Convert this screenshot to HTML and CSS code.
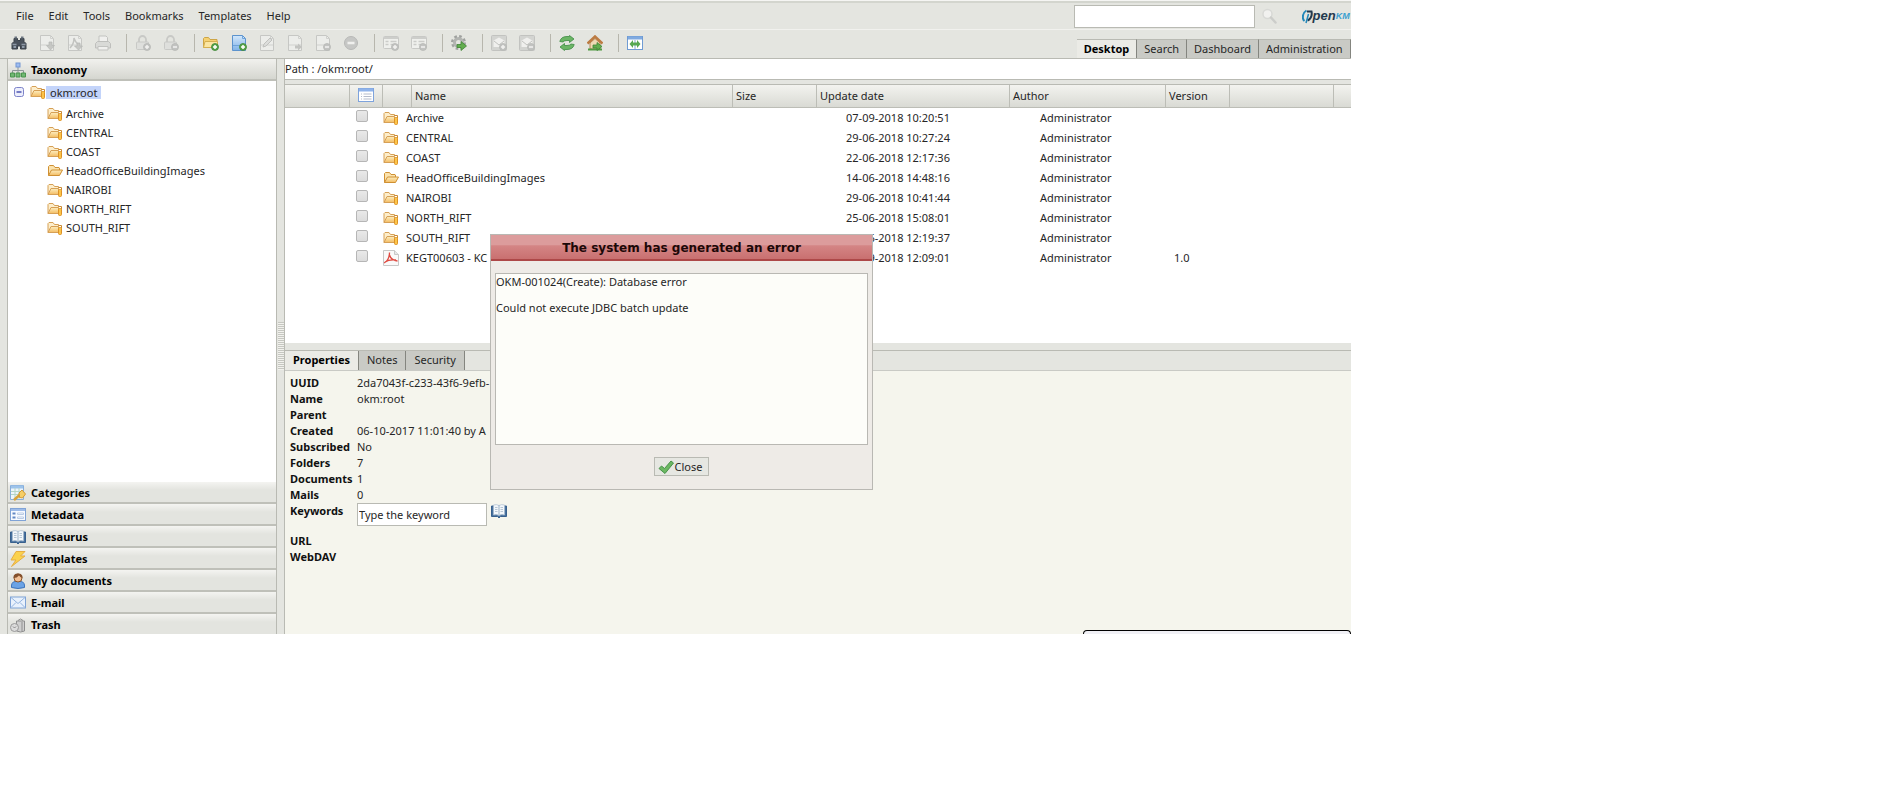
FILE: index.html
```html
<!DOCTYPE html>
<html lang="en">
<head>
    <meta charset="UTF-8">
    <meta name="viewport" content="width=device-width, initial-scale=1.0">
    <title>OpenKM</title>
    <link rel="stylesheet" href="styles.css">
</head>
<body>
    <!-- Shared icons -->
    <svg class="sprite" aria-hidden="true">
        <defs>
            <linearGradient id="gold" x1="0" y1="0" x2="0" y2="1"><stop offset="0" stop-color="#fdeec0"/><stop offset="1" stop-color="#f3bc62"/></linearGradient>
            <linearGradient id="blue" x1="0" y1="0" x2="0" y2="1"><stop offset="0" stop-color="#d4e8fb"/><stop offset="1" stop-color="#7fb2e8"/></linearGradient>
        </defs>
        <symbol id="folder" viewBox="0 0 16 16">
            <path d="M1.500 12.500v-9l1-1h4l1.500 2h4l.5.5v2" fill="#fbe3ae" stroke="#cf9033"/>
            <path d="M1.500 12.500l3-5.500h11l-3 5.500z" fill="url(#gold)" stroke="#cf9033" stroke-linejoin="round"/>
        </symbol>
        <symbol id="folder-sub" viewBox="0 0 16 16">
            <path d="M1 12.500v-9l1-1h4l1.500 2h4v2" fill="#fdeecb" stroke="#d6a056"/>
            <path d="M1 12.500l3-6h7.500v6z" fill="url(#gold)" stroke="#d6a056" stroke-linejoin="round"/>
            <path d="M11.500 5.500h3v3" fill="none" stroke="#c98a35"/>
            <rect x="11.500" y="7.500" width="3" height="7" rx="1" fill="#fbc44a" stroke="#dd9226"/>
        </symbol>
        <symbol id="book" viewBox="0 0 16 16">
            <path d="M.5 3h15v10.500h-6l-1.500 1.500-1.500-1.500h-6z" fill="#47719f" stroke="#38608d"/>
            <path d="M2.500 2q3-1 5.500.5v10q-2.500-1.500-5.500-.5zM13.500 2q-3-1-5.500.5v10q2.500-1.500 5.500-.5z" fill="#f3f7fb" stroke="#a9bccf" stroke-width=".7"/>
            <path d="M4 4.500h2.500M4 6.500h2.500M4 8.500h2.500M9.500 4.500h2.500M9.500 6.500h2.500M9.500 8.500h2.500" stroke="#9bb0c4" stroke-width=".7"/>
        </symbol>
        <symbol id="page" viewBox="0 0 16 16">
            <path d="M1.500.5h10l3 3v12h-13z" fill="#ecedea" stroke="#c6c7c4"/>
            <path d="M11.500.5v3h3M2 10h12" fill="none" stroke="#d0d1ce"/>
        </symbol>
        <symbol id="plus" viewBox="0 0 16 16">
            <circle cx="12" cy="12" r="3.500" fill="#58a64b" stroke="#3d8737" stroke-width=".8"/>
            <path d="M10 12h4M12 10v4" stroke="#fff" stroke-width="1.500"/>
        </symbol>
        <symbol id="plus-off" viewBox="0 0 16 16">
            <circle cx="12" cy="12" r="3.500" fill="#c2c3c1" stroke="#b6b7b5" stroke-width=".8"/>
            <path d="M10 12h4M12 10v4" stroke="#f2f2f0" stroke-width="1.500"/>
        </symbol>
        <symbol id="minus-off" viewBox="0 0 16 16">
            <circle cx="12" cy="12" r="3.500" fill="#c2c3c1" stroke="#b6b7b5" stroke-width=".8"/>
            <path d="M10 12h4" stroke="#f2f2f0" stroke-width="1.500"/>
        </symbol>
        <symbol id="lock" viewBox="0 0 16 16">
            <path d="M4 8V4.500a3.500 3.500 0 0 1 7 0V8" fill="none" stroke="#c8c9c6" stroke-width="1.800"/>
            <rect x="1.500" y="7" width="12" height="7.500" rx="1" fill="#dedfdc" stroke="#c8c9c6"/>
        </symbol>
        <symbol id="form" viewBox="0 0 16 16">
            <rect x=".5" y="1.500" width="15" height="12" rx="1" fill="#eff0ed" stroke="#c8c9c6"/>
            <path d="M1 3h14" stroke="#cdcecb" stroke-width="2"/>
            <path d="M2.500 6.500h3M2.500 9.500h3M7.500 6.500h6M7.500 9.500h4" stroke="#cbccc9" stroke-width="1.500"/>
        </symbol>
        <symbol id="mail-off" viewBox="0 0 16 16">
            <rect x=".5" y=".5" width="15" height="15" rx="1" fill="#d3d4d1" stroke="#c2c3c0"/>
            <path d="M2.500 5.500l5.500-3 5.500 3v6.500h-11z" fill="#f0f0ee"/>
            <path d="M3 6l5 4 5-4" fill="none" stroke="#c2c3c0"/>
        </symbol>
        <symbol id="pdf" viewBox="0 0 16 16">
            <path d="M.5.5h11l4 4v11h-15z" fill="#fafafa" stroke="#c8c8c8"/>
            <path d="M11.500.5v4h4" fill="#e8e8e8" stroke="#c8c8c8"/>
            <path d="M1 13c3-1 5.500-5.500 5.500-10.500M6.500 5c1 3.500 4 5.500 8 6M2 12c3-2 7-2.500 11-2" fill="none" stroke="#df4a41" stroke-width="1.300"/>
        </symbol>
    </svg>

    <div class="app">
        <div class="menubar">
            <nav class="menu" aria-label="Main menu">
                <a href="#">File</a>
                <a href="#">Edit</a>
                <a href="#">Tools</a>
                <a href="#">Bookmarks</a>
                <a href="#">Templates</a>
                <a href="#">Help</a>
            </nav>
            <div class="quick-search">
                <input type="text" class="search-box" aria-label="Quick search">
                <svg class="icon" viewBox="0 0 16 16"><circle cx="6.500" cy="6" r="4.500" fill="#f1f1ef" stroke="#d8d9d6" stroke-width="1.500"/><path d="M10 9.500l4.500 5" stroke="#cccdca" stroke-width="2.500" stroke-linecap="round"/></svg>
                <div class="logo">
                    <svg width="11" height="15" viewBox="0 0 11 15"><path d="M4.500 1.500C2 3 .5 6 1 9.500q.2 1.500 1.500 2.500" fill="none" stroke="#2287b9" stroke-width="2"/><path d="M5 2.500h4.500c.8 4-1 7.500-4 9" fill="none" stroke="#23394d" stroke-width="2"/><path d="M6.500 5L4 14" stroke="#2287b9" stroke-width="1.500"/></svg>
                    <span class="logo-dark">pen</span><span class="logo-blue">KM</span>
                </div>
            </div>
        </div>

        <div class="toolbar">
            <div class="tools">
                <button aria-label="Find"><svg class="icon" viewBox="0 0 16 16"><path d="M3 3.500h3.500v2h3v-2H13v3l2 2v5.500H9.500v-3h-3v3H1V8.500l2-2z" fill="#4a525c" stroke="#3a424b"/><path d="M1.500 9.500h4M10.500 9.500h4" stroke="#8d98a5" stroke-width="1.500"/><path d="M3.500 2.500h2.500M10 2.500h2.500" stroke="#6b7580" stroke-width="2"/><path d="M2.500 12h2.500M11 12h2.500" stroke="#a8b5c4" stroke-width="1.500"/></svg></button>
                <button aria-label="Download" disabled><svg class="icon" viewBox="0 0 16 16"><use href="#page"/><path d="M10 7h3v3.500h2.500L11.500 15 7.500 10.500H10z" fill="#c6c7c4" stroke="#b6b7b5" stroke-width=".7"/></svg></button>
                <button aria-label="Download as PDF" disabled><svg class="icon" viewBox="0 0 16 16"><use href="#page"/><path d="M3 13q4-4 4-10 2 6 6 7" fill="none" stroke="#c2c3c0" stroke-width="1.500"/><path d="M10 8h3v3h2.500l-4 4-4-4H10z" fill="#c6c7c4" stroke="#b6b7b5" stroke-width=".7"/></svg></button>
                <button aria-label="Print" disabled><svg class="icon" viewBox="0 0 16 16"><path d="M4 7V1h7l1.500 1.500V7" fill="#f0f0ee" stroke="#c2c3c0"/><path d="M.5 13V8.500l2-2h11l2 2V13z" fill="#d9dad7" stroke="#bebfbc"/><path d="M3 11.500h10V15H3z" fill="#f0f0ee" stroke="#c2c3c0"/></svg></button>
                <span class="separator"></span>
                <button aria-label="Lock" disabled><svg class="icon" viewBox="0 0 16 16"><use href="#lock"/><use href="#plus-off"/></svg></button>
                <button aria-label="Unlock" disabled><svg class="icon" viewBox="0 0 16 16"><use href="#lock"/><use href="#minus-off"/></svg></button>
                <span class="separator"></span>
                <button aria-label="Create folder"><svg class="icon" viewBox="0 0 16 16"><path d="M.5 12.500v-9l1-1h4l1.500 2h7v8z" fill="#f5d173" stroke="#cda546"/><path d="M.5 12.500l1.500-6h12.500v6z" fill="#fbe6a3" stroke="#d5b052"/><use href="#plus"/></svg></button>
                <button aria-label="Add document"><svg class="icon" viewBox="0 0 16 16"><path d="M1.500.5h10l3 3v12h-13z" fill="url(#blue)" stroke="#5c93cd"/><path d="M11.500.5v3h3M2 10.500h12" fill="none" stroke="#6ea3da"/><use href="#plus"/></svg></button>
                <button aria-label="Edit document" disabled><svg class="icon" viewBox="0 0 16 16"><use href="#page"/><path d="M4 12l1-3 6-6 2 2-6 6z" fill="#dcdddb" stroke="#c0c1be"/></svg></button>
                <button aria-label="Check in" disabled><svg class="icon" viewBox="0 0 16 16"><use href="#page"/><path d="M8 10.500h3v-2l4 3.500-4 3.500v-2H8z" fill="#c2c3c0"/></svg></button>
                <button aria-label="Cancel edit" disabled><svg class="icon" viewBox="0 0 16 16"><use href="#page"/><use href="#minus-off"/></svg></button>
                <button aria-label="Delete" disabled><svg class="icon" viewBox="0 0 16 16"><circle cx="8" cy="8" r="6.500" fill="#c6c7c5" stroke="#b8b9b7"/><path d="M4.500 8h7" stroke="#f0f0ee" stroke-width="2.500"/></svg></button>
                <span class="separator"></span>
                <button aria-label="Add property group" disabled><svg class="icon" viewBox="0 0 16 16"><use href="#form"/><use href="#plus-off"/></svg></button>
                <button aria-label="Remove property group" disabled><svg class="icon" viewBox="0 0 16 16"><use href="#form"/><use href="#minus-off"/></svg></button>
                <span class="separator"></span>
                <button aria-label="Start workflow"><svg class="icon" viewBox="0 0 16 16"><circle cx="7.500" cy="7.500" r="6" fill="none" stroke="#9fa19f" stroke-width="3" stroke-dasharray="2.500 2.200"/><circle cx="7.500" cy="7.500" r="4" fill="none" stroke="#b2b4b1" stroke-width="3"/><path d="M6 9.500h4V6.500l5.500 4.500-5.500 4.500v-3H6z" fill="#62ad4e" stroke="#3e8435" stroke-width=".8"/></svg></button>
                <span class="separator"></span>
                <button aria-label="Add subscription" disabled><svg class="icon" viewBox="0 0 16 16"><use href="#mail-off"/><use href="#plus-off"/></svg></button>
                <button aria-label="Remove subscription" disabled><svg class="icon" viewBox="0 0 16 16"><use href="#mail-off"/><use href="#minus-off"/></svg></button>
                <span class="separator"></span>
                <button aria-label="Refresh"><svg class="icon" viewBox="0 0 16 16"><path d="M.8 6.500Q2 1.500 8 1.500h2.500V.5L15 4l-4.500 3.500V5.500H8q-3 0-4 1.500zM15.200 9.500Q14 14.500 8 14.500H5.500v1L1 12l4.500-3.500v2H8q3 0 4-1.500z" fill="#6bb565" stroke="#3d8a42" stroke-width=".8"/></svg></button>
                <button aria-label="Home"><svg class="icon" viewBox="0 0 16 16"><path d="M3 8v6h10V8L8 3.500z" fill="#eed9b5" stroke="#b58a56"/><path d="M.5 8.500L8 1.500l7.500 7" fill="none" stroke="#bc7b43" stroke-width="2.500"/><path d="M1 14.500h14" stroke="#509b42" stroke-width="2"/><path d="M6 10h4V7.500l5 4-5 4V13H6z" fill="#62ad4e" stroke="#3e8435" stroke-width=".8"/></svg></button>
                <span class="separator"></span>
                <button aria-label="Splitter resize"><svg class="icon" viewBox="0 0 16 16"><rect x=".5" y="1.500" width="15" height="13" fill="#fff" stroke="#6f9bd3"/><path d="M1 3h14" stroke="#80aae0" stroke-width="3"/><path d="M8 5v9" stroke="#8aa8cf"/><path d="M2.500 9l3.500-4v2.500h4V5l3.500 4-3.500 4v-2.500H6V13z" fill="#57a852"/></svg></button>
            </div>
            <div class="tabs">
                <button class="tab selected">Desktop</button>
                <button class="tab">Search</button>
                <button class="tab">Dashboard</button>
                <button class="tab">Administration</button>
            </div>
        </div>

        <div class="workspace">
            <!-- Left stack -->
            <aside class="stack">
                <button class="stack-header open"><svg class="icon" viewBox="0 0 16 16"><path d="M8 5v4M2.500 11V8.500h11V11M8 9v2" fill="none" stroke="#8d9698"/><rect x="6" y="1" width="4" height="4" fill="#9dbcf0" stroke="#7396d4"/><path d="M.5 11h4v4h-4zM6 11h4v4H6zM11.500 11h4v4h-4z" fill="#71b872" stroke="#4b954f"/></svg>Taxonomy</button>
                <div class="tree">
                    <div class="tree-root">
                        <svg class="toggle" viewBox="0 0 10 10"><rect x=".5" y=".5" width="9" height="9" rx="2" fill="#eceefc" stroke="#7d83c9"/><path d="M2.500 5h5" stroke="#4d55b0" stroke-width="1.500"/></svg>
                        <svg class="icon"><use href="#folder-sub"/></svg><a href="#" class="current">okm:root</a>
                    </div>
                    <ul>
                        <li><svg class="icon"><use href="#folder-sub"/></svg><a href="#">Archive</a></li>
                        <li><svg class="icon"><use href="#folder-sub"/></svg><a href="#">CENTRAL</a></li>
                        <li><svg class="icon"><use href="#folder-sub"/></svg><a href="#">COAST</a></li>
                        <li><svg class="icon"><use href="#folder"/></svg><a href="#">HeadOfficeBuildingImages</a></li>
                        <li><svg class="icon"><use href="#folder-sub"/></svg><a href="#">NAIROBI</a></li>
                        <li><svg class="icon"><use href="#folder-sub"/></svg><a href="#">NORTH_RIFT</a></li>
                        <li><svg class="icon"><use href="#folder-sub"/></svg><a href="#">SOUTH_RIFT</a></li>
                    </ul>
                </div>
                <button class="stack-header"><svg class="icon" viewBox="0 0 16 16"><path d="M.5.5h13v14H.5z" fill="#eef5fc" stroke="#88aeda"/><path d="M1 2h12" stroke="#9dc3ea" stroke-width="3"/><path d="M1 6.500h12M1 9.500h12M5 3v11M9 3v11" stroke="#b5d5c6"/><path d="M4 15l5.500-5" stroke="#d8a23a" stroke-width="2.500"/><path d="M9 8l3-3 3.500 4-3 4-3-.5z" fill="#f6ce66" stroke="#d29a32"/></svg>Categories</button>
                <button class="stack-header"><svg class="icon" viewBox="0 0 16 16"><rect x=".5" y="1.500" width="15" height="12" fill="#f7faff" stroke="#80a3d6"/><path d="M1 3h14" stroke="#9dbbe8" stroke-width="2"/><path d="M2.500 6.500h3M2.500 10.500h3" stroke="#6288c4" stroke-width="2"/><path d="M7.500 6h6v1.500h-6zM7.500 10h6v1.500h-6z" fill="#fff" stroke="#b9cbe4"/></svg>Metadata</button>
                <button class="stack-header"><svg class="icon"><use href="#book"/></svg>Thesaurus</button>
                <button class="stack-header"><svg class="icon" viewBox="0 0 16 16"><path d="M6 .5h9L10.500 5H15L1.500 15.500 6 9H1z" fill="#fbd24d" stroke="#e6ad43"/></svg>Templates</button>
                <button class="stack-header"><svg class="icon" viewBox="0 0 16 16"><path d="M1.500 14.500Q1 9 5 8.500h6q4 .5 3.500 6-6.500 2-13 0z" fill="#6ba3e6" stroke="#3d74bb"/><circle cx="8" cy="5" r="4" fill="#f2c197" stroke="#8b5428"/><path d="M3.500 5Q3 .5 8 .5t4.500 4.500Q10 4 9 2.500 7 5 3.500 5z" fill="#84502c"/></svg>My documents</button>
                <button class="stack-header"><svg class="icon" viewBox="0 0 16 16"><rect x=".5" y="2" width="15" height="11" fill="#e8f1fc" stroke="#7fa3d6"/><path d="M1 2.500l7 6 7-6M1 12.500l5-5M15 12.500l-5-5" fill="none" stroke="#93b4e0"/></svg>E-mail</button>
                <button class="stack-header"><svg class="icon" viewBox="0 0 16 16"><path d="M6.500 4h8v10q-4 2-8 0z" fill="#cfcfcf" stroke="#8f8f8f"/><path d="M8 3.500q2.500-3 5 0M12 5v9" fill="none" stroke="#8f8f8f"/><circle cx="4.500" cy="10.500" r="4" fill="#dcdcdc" stroke="#999"/><path d="M3 9.500l1.500 1.500L6 9.500" fill="none" stroke="#888"/></svg>Trash</button>
            </aside>

            <div class="splitter"><span class="grip"></span></div>

            <main class="content">
                <div class="path">Path : /okm:root/</div>
                <div class="browser">
                    <table class="files">
                        <colgroup>
                            <col class="c-status"><col class="c-check"><col class="c-icon"><col class="c-name"><col class="c-size"><col class="c-date"><col class="c-author"><col class="c-version"><col class="c-extra"><col>
                        </colgroup>
                        <thead>
                            <tr>
                                <th></th>
                                <th class="check"><svg class="icon" viewBox="0 0 16 16"><rect x=".5" y="1.500" width="15" height="13" fill="#fff" stroke="#7ea3dc"/><path d="M1 3h14" stroke="#8fb3ea" stroke-width="3"/><path d="M3 7h1M3 9.500h1M3 12h1M5.500 7h8M5.500 9.500h8M5.500 12h8" stroke="#b5bccb"/></svg></th>
                                <th></th>
                                <th>Name</th>
                                <th>Size</th>
                                <th>Update date</th>
                                <th>Author</th>
                                <th>Version</th>
                                <th></th>
                                <th></th>
                            </tr>
                        </thead>
                        <tbody>
                            <tr><td></td><td class="check"><input type="checkbox" aria-label="Archive"></td><td colspan="2"><div class="file"><svg class="icon"><use href="#folder-sub"/></svg>Archive</div></td><td></td><td class="date">07-09-2018 10:20:51</td><td class="author">Administrator</td><td></td><td></td><td></td></tr>
                            <tr><td></td><td class="check"><input type="checkbox" aria-label="CENTRAL"></td><td colspan="2"><div class="file"><svg class="icon"><use href="#folder-sub"/></svg>CENTRAL</div></td><td></td><td class="date">29-06-2018 10:27:24</td><td class="author">Administrator</td><td></td><td></td><td></td></tr>
                            <tr><td></td><td class="check"><input type="checkbox" aria-label="COAST"></td><td colspan="2"><div class="file"><svg class="icon"><use href="#folder-sub"/></svg>COAST</div></td><td></td><td class="date">22-06-2018 12:17:36</td><td class="author">Administrator</td><td></td><td></td><td></td></tr>
                            <tr><td></td><td class="check"><input type="checkbox" aria-label="HeadOfficeBuildingImages"></td><td colspan="2"><div class="file"><svg class="icon"><use href="#folder"/></svg>HeadOfficeBuildingImages</div></td><td></td><td class="date">14-06-2018 14:48:16</td><td class="author">Administrator</td><td></td><td></td><td></td></tr>
                            <tr><td></td><td class="check"><input type="checkbox" aria-label="NAIROBI"></td><td colspan="2"><div class="file"><svg class="icon"><use href="#folder-sub"/></svg>NAIROBI</div></td><td></td><td class="date">29-06-2018 10:41:44</td><td class="author">Administrator</td><td></td><td></td><td></td></tr>
                            <tr><td></td><td class="check"><input type="checkbox" aria-label="NORTH_RIFT"></td><td colspan="2"><div class="file"><svg class="icon"><use href="#folder-sub"/></svg>NORTH_RIFT</div></td><td></td><td class="date">25-06-2018 15:08:01</td><td class="author">Administrator</td><td></td><td></td><td></td></tr>
                            <tr><td></td><td class="check"><input type="checkbox" aria-label="SOUTH_RIFT"></td><td colspan="2"><div class="file"><svg class="icon"><use href="#folder-sub"/></svg>SOUTH_RIFT</div></td><td></td><td class="date">25-06-2018 12:19:37</td><td class="author">Administrator</td><td></td><td></td><td></td></tr>
                            <tr><td></td><td class="check"><input type="checkbox" aria-label="KEGT00603"></td><td colspan="2"><div class="file"><svg class="icon"><use href="#pdf"/></svg>KEGT00603 - KC</div></td><td></td><td class="date">07-09-2018 12:09:01</td><td class="author">Administrator</td><td class="version">1.0</td><td></td><td></td></tr>
                        </tbody>
                    </table>
                </div>

                <div class="properties">
                    <div class="tabs">
                        <button class="tab selected">Properties</button>
                        <button class="tab">Notes</button>
                        <button class="tab">Security</button>
                    </div>
                    <table class="props">
                        <tr><th>UUID</th><td>2da7043f-c233-43f6-9efb-</td></tr>
                        <tr><th>Name</th><td>okm:root</td></tr>
                        <tr><th>Parent</th><td></td></tr>
                        <tr><th>Created</th><td>06-10-2017 11:01:40 by A</td></tr>
                        <tr><th>Subscribed</th><td>No</td></tr>
                        <tr><th>Folders</th><td>7</td></tr>
                        <tr><th>Documents</th><td>1</td></tr>
                        <tr><th>Mails</th><td>0</td></tr>
                        <tr class="keywords">
                            <th><label for="keyword">Keywords</label></th>
                            <td><div class="keyword-row"><input type="text" id="keyword" value="Type the keyword"><svg class="icon"><use href="#book"/></svg></div></td>
                        </tr>
                        <tr><th>URL</th><td></td></tr>
                        <tr><th>WebDAV</th><td></td></tr>
                    </table>
                </div>
            </main>
        </div>

        <!-- Error popup -->
        <div class="dialog" role="dialog" aria-labelledby="dialog-title">
            <h2 id="dialog-title">The system has generated an error</h2>
            <div class="dialog-body">
                <div class="message">
                    <p>OKM-001024(Create): Database error</p>
                    <p>Could not execute JDBC batch update</p>
                </div>
                <button class="close-btn"><svg class="icon" viewBox="0 0 16 16"><path d="M1 9.500l2.500-2.500 3 2.500L13 2l2.500 2L7 14.500z" fill="#6cb862" stroke="#47924a" stroke-linejoin="round"/></svg>Close</button>
            </div>
        </div>

        <!-- Status popup, sliding in from the bottom -->
        <div class="status-popup"></div>
    </div>
</body>
</html>
```

FILE: styles.css
```css
* {
    box-sizing: border-box;
}
body {
    margin: 0;
    background-color: #fff;
    color: #262626;
    font-family: "Noto Sans", Verdana, sans-serif;
    font-size: 11px;
    line-height: 16px;
}
button, input {
    font: inherit;
    color: inherit;
    margin: 0;
}
a {
    color: inherit;
    text-decoration: none;
}
.sprite {
    display: block;
    width: 0;
    height: 0;
}
.icon {
    display: block;
    flex: none;
    width: 16px;
    height: 16px;
}
.app {
    position: relative;
    display: flex;
    flex-direction: column;
    width: calc(72vw - 3px);
    height: 80vh;
    overflow: hidden;
    background-color: #e4e5e0;
    border-top: 1px solid #f5f5f3;
}

/* Menu */
.menubar {
    display: flex;
    align-items: center;
    height: 29px;
    flex: none;
    border-top: 2px solid #d3d5ce;
    border-bottom: 1px solid #f1f1ee;
}
.menu {
    display: flex;
    gap: 15px;
    padding-left: 16px;
}
.quick-search {
    display: flex;
    align-items: center;
    gap: 6px;
    margin-left: auto;
}
.search-box {
    width: 181px;
    height: 23px;
    padding: 0 4px;
    border: 1px solid #b9bab3;
    background-color: #fff;
}
.logo {
    display: flex;
    align-items: center;
    width: 68px;
    padding-left: 19px;
    font: italic bold 13px/16px "Liberation Sans", sans-serif;
}
.logo svg {
    flex: none;
}
.logo-dark {
    color: #23394d;
}
.logo-blue {
    color: #3a9fd0;
    font-size: 9px;
}

/* Toolbar */
.toolbar {
    display: flex;
    justify-content: space-between;
    align-items: flex-end;
    height: 29px;
    flex: none;
    border-bottom: 1px solid #b9bab3;
}
.tools {
    display: flex;
    gap: 4px;
    padding: 0 0 3px 7px;
}
.tools button {
    display: flex;
    align-items: center;
    justify-content: center;
    width: 24px;
    height: 24px;
    padding: 0;
    border: 0;
    background: none;
}
.separator {
    width: 8px;
    height: 18px;
    margin-top: 3px;
    border-right: 1px solid #b7b6ad;
}
.tabs {
    display: flex;
}
.tab {
    height: 19px;
    padding: 0 7px;
    border: 0;
    border-top: 1px solid #b9bab3;
    border-right: 1px solid #84857f;
    background-color: #c9cac5;
}
.tab.selected {
    background-color: #ebebe6;
    color: #000;
    font-weight: bold;
}

/* Stack panel */
.workspace {
    display: flex;
    flex: 1;
    min-height: 0;
    padding-left: 7px;
}
.stack {
    display: flex;
    flex-direction: column;
    width: 270px;
    flex: none;
    margin-bottom: -2px;
    border-left: 1px solid #b9bab3;
    border-right: 1px solid #b9bab3;
}
.stack-header {
    display: flex;
    align-items: center;
    gap: 5px;
    height: 22px;
    flex: none;
    padding: 2px 2px 0;
    border: 0;
    border-bottom: 2px solid #bfc0b9;
    background: linear-gradient(#f4f4f1, #e3e4df 40%, #e3e4df);
    color: #000;
    font-weight: bold;
}
.stack-header.open {
    background: linear-gradient(#f1f1ee, #d5d6d0);
}
.tree {
    flex: 1;
    min-height: 0;
    padding-top: 3px;
    overflow: hidden;
    background-color: #fff;
}
.tree-root, .tree li {
    display: flex;
    align-items: center;
}
.tree-root {
    padding-left: 6px;
}
.toggle {
    width: 10px;
    height: 10px;
    margin-right: 6px;
}
.current {
    padding: 0 4px;
    line-height: 13px;
    background-color: #c3d4fa;
}
.tree ul {
    margin: 4px 0 0;
    padding: 0 0 0 39px;
    list-style: none;
}
.tree li {
    gap: 3px;
    height: 19px;
}

.splitter {
    display: flex;
    align-items: center;
    justify-content: flex-end;
    width: 7px;
    flex: none;
}
.grip {
    width: 6px;
    height: 48px;
    background: repeating-linear-gradient(#c6c7c1 0 1px, #f2f2ee 1px 2px);
}

/* File browser */
.content {
    display: flex;
    flex-direction: column;
    flex: 1;
    min-width: 0;
    border-left: 1px solid #b9bab3;
}
.path {
    height: 21px;
    flex: none;
    padding-top: 2px;
    border-bottom: 1px solid #b9bab3;
    background-color: #fff;
}
.browser {
    flex: 10;
    min-height: 0;
    margin-top: 4px;
    border-top: 1px solid #b9bab3;
    background-color: #fff;
}
.files {
    width: 100%;
    table-layout: fixed;
    border-collapse: separate;
    border-spacing: 0;
}
.files th {
    height: 23px;
    padding: 0 3px;
    border-right: 1px solid #bcbdb6;
    border-bottom: 1px solid #bcbdb6;
    background: linear-gradient(#f3f3ef, #d9dad4);
    font-weight: normal;
    text-align: left;
}
.files th:last-child {
    border-right: 0;
}
.files td {
    height: 20px;
    padding: 0;
    white-space: nowrap;
}
.c-status { width: 65px; }
.c-check { width: 33px; }
.c-icon { width: 29px; }
.c-name { width: 321px; }
.c-size { width: 84px; }
.c-date { width: 193px; }
.c-author { width: 156px; }
.c-version { width: 64px; }
.c-extra { width: 104px; }
.files .check {
    padding: 0 0 0 6px;
    vertical-align: top;
}
.files th.check {
    padding: 2px 0 0 8px;
}
.files input {
    display: block;
    width: 12px;
    height: 12px;
    margin-top: 2px;
    appearance: none;
    border: 1px solid #b6b6b6;
    border-radius: 2px;
    background: linear-gradient(#e9e9e9, #dcdcdc);
}
.file {
    display: flex;
    align-items: center;
    gap: 7px;
}
.files .date {
    padding-left: 29px;
}
.files .author {
    padding-left: 30px;
}
.files .version {
    padding-left: 8px;
}

/* Properties */
.properties {
    flex: 11;
    min-height: 0;
    margin-top: 7px;
    background-color: #f5f5ed;
}
.properties .tabs {
    border-top: 1px solid #b9bab3;
    border-bottom: 1px solid #c9cac5;
    background-color: #e4e5e0;
}
.properties .tab {
    padding: 0 8px;
    border-top: 0;
}
.props {
    margin: 4px 0 0 5px;
    border-spacing: 0;
}
.props th, .props td {
    height: 16px;
    padding: 0;
    text-align: left;
    vertical-align: top;
    white-space: nowrap;
}
.props th {
    min-width: 67px;
    padding-right: 3px;
    color: #111;
}
.props .keywords td {
    height: 30px;
}
.keyword-row {
    display: flex;
    gap: 4px;
}
.keyword-row input {
    width: 130px;
    height: 23px;
    padding: 0 1px;
    border: 1px solid #b9bab3;
    background-color: #fff;
}

/* Popups */
.dialog {
    position: absolute;
    top: 233px;
    left: 490px;
    width: 383px;
    border: 1px solid #b9b8b3;
    background-color: #eeebe7;
}
.dialog h2 {
    height: 26px;
    margin: 0;
    border-bottom: 2px solid #ad4848;
    background: linear-gradient(#dc9c9c 40%, #d48585 45%, #c97070);
    color: #1c0808;
    font-family: "DejaVu Sans", Verdana, sans-serif;
    font-size: 12px;
    line-height: 26px;
    text-align: center;
}
.dialog-body {
    display: flex;
    flex-direction: column;
    align-items: center;
    padding: 12px 4px 13px;
}
.message {
    align-self: stretch;
    height: 172px;
    border: 1px solid #b9b8b3;
    background-color: #fdfdf9;
    line-height: 15px;
}
.message p {
    margin: 0 0 11px;
}
.close-btn {
    display: flex;
    align-items: center;
    gap: 1px;
    height: 19px;
    margin-top: 12px;
    padding: 0 6px 0 3px;
    border: 1px solid #b9bab3;
    background-color: #e6e7e2;
}
.status-popup {
    position: absolute;
    right: 0;
    bottom: 0;
    width: 268px;
    height: 4px;
    border: 1px solid #000;
    border-bottom: 0;
    border-radius: 4px 4px 0 0;
    background-color: #f0f0f5;
}
```
